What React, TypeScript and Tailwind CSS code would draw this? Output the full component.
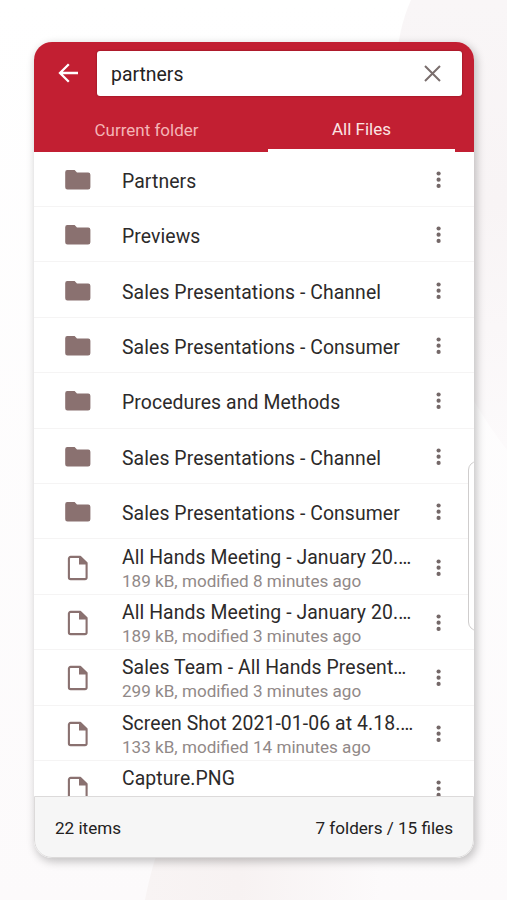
import React from "react";

type Item = { kind: "folder" | "file"; name: string; meta?: string };

const items: Item[] = [
  { kind: "folder", name: "Partners" },
  { kind: "folder", name: "Previews" },
  { kind: "folder", name: "Sales Presentations - Channel" },
  { kind: "folder", name: "Sales Presentations - Consumer" },
  { kind: "folder", name: "Procedures and Methods" },
  { kind: "folder", name: "Sales Presentations - Channel" },
  { kind: "folder", name: "Sales Presentations - Consumer" },
  { kind: "file", name: "All Hands Meeting - January 20.…", meta: "189 kB, modified 8 minutes ago" },
  { kind: "file", name: "All Hands Meeting - January 20.…", meta: "189 kB, modified 3 minutes ago" },
  { kind: "file", name: "Sales Team - All Hands Present…", meta: "299 kB, modified 3 minutes ago" },
  { kind: "file", name: "Screen Shot 2021-01-06 at 4.18.…", meta: "133 kB, modified 14 minutes ago" },
  { kind: "file", name: "Capture.PNG" },
];

function Backdrop() {
  return (
    <svg className="absolute inset-0" width="507" height="900" viewBox="0 0 507 900" aria-hidden="true">
      <defs>
        <linearGradient id="base" x1="0" y1="0" x2="0" y2="1">
          <stop offset="0" stopColor="#ffffff" />
          <stop offset="1" stopColor="#fcfafb" />
        </linearGradient>
        <linearGradient id="top" x1="0" y1="0" x2="0" y2="1">
          <stop offset="0" stopColor="#f9f6f7" />
          <stop offset="0.45" stopColor="#f8f4f5" />
          <stop offset="1" stopColor="#fcfafb" />
        </linearGradient>
        <linearGradient id="bottom" x1="0" y1="0" x2="1" y2="0">
          <stop offset="0" stopColor="#f8f4f4" />
          <stop offset="0.4" stopColor="#f7f2f2" />
          <stop offset="1" stopColor="#fcfafb" />
        </linearGradient>
      </defs>
      <rect width="507" height="900" fill="url(#base)" />
      <path d="M411 0C402 20 398 40 395 70C388 210 430 350 507 450V0Z" fill="url(#top)" />
      <path d="M145 900C148 885 151 872 156 856H380V900Z" fill="url(#bottom)" />
    </svg>
  );
}

function FolderIcon() {
  return (
    <svg className="mt-[2px]" width="26" height="20" viewBox="0 0 26 20" fill="#8a7170">
      <path d="M2.6 0H9.6L12 2.4H23.2A2.3 2.3 0 0 1 25.4 4.7V17.3A2.3 2.3 0 0 1 23.1 19.6H2.5A2.3 2.3 0 0 1 .2 17.3V2.3A2.3 2.3 0 0 1 2.6 0Z" />
    </svg>
  );
}

function FileIcon() {
  return (
    <svg className="mt-[2px]" width="22" height="26" viewBox="0 0 22 26" fill="none">
      <path d="M3.6 1.9H13.4L19.6 8.1V22.4A1.7 1.7 0 0 1 17.9 24.1H3.6A1.7 1.7 0 0 1 1.9 22.4V3.6A1.7 1.7 0 0 1 3.6 1.9Z" stroke="#8a7170" strokeWidth="2.1" strokeLinejoin="round" />
      <path d="M12 1.9H13.4L19.6 8.1V9.4H12Z" fill="#8a7170" />
    </svg>
  );
}

function MoreIcon() {
  return (
    <svg className="mt-[2px]" width="6" height="18" viewBox="0 0 6 18" fill="#746868">
      <circle cx="2.6" cy="2.5" r="2.1" />
      <circle cx="2.6" cy="8.7" r="2.1" />
      <circle cx="2.6" cy="14.9" r="2.1" />
    </svg>
  );
}

function Row({ item }: { item: Item }) {
  return (
    <li className="flex h-[55.4px] shrink-0 items-center border-b border-[#f5f4f4]">
      <div className="flex w-[88px] shrink-0 justify-center">
        {item.kind === "file" ? <FileIcon /> : <FolderIcon />}
      </div>
      <div
        className={
          item.kind === "file"
            ? "flex h-[48px] min-w-0 flex-1 translate-y-[2.9px] flex-col whitespace-nowrap"
            : "flex min-w-0 flex-1 translate-y-[2.6px] flex-col whitespace-nowrap"
        }
      >
        <span className="text-[19.4px] leading-[24px] tracking-[0.08px] text-[#2c2a2a]">{item.name}</span>
        {item.meta && (
          <span className="-mt-px text-[17.1px] leading-[24px] text-[#918988]">{item.meta}</span>
        )}
      </div>
      <div className="mr-[32.5px] flex w-[6px] shrink-0">
        <MoreIcon />
      </div>
    </li>
  );
}

export default function App() {
  return (
    <div className="relative h-[900px] w-[507px] overflow-hidden font-['Roboto',sans-serif]">
      <Backdrop />
      <div className="relative px-[34px] pt-[42px]">
        <main className="relative flex h-[816px] w-[440px] flex-col overflow-hidden rounded-[18px] bg-white shadow-[2px_3px_9px_1px_rgba(0,0,0,0.22)]">
          <header className="flex h-[109.6px] shrink-0 flex-col bg-[#c21f32]">
            <div className="flex items-center pt-[9px] pl-[24px]">
              <svg className="-mt-[1px]" width="22" height="20" viewBox="0 0 22 20" fill="none" stroke="white" strokeWidth="2.3">
                <path d="M20 10H2M10.8 1.2L2 10L10.8 18.8" />
              </svg>
              <div className="ml-[17px] flex h-[45px] w-[365px] items-center justify-between rounded-[3px] bg-white pr-[21px] pl-[14px] shadow-[0_0_2px_rgba(70,0,10,0.6)]">
                <span className="mt-[2px] text-[19.4px] text-[#242222]">partners</span>
                <svg className="-mt-[1px]" width="17" height="17" viewBox="0 0 17 17" fill="none" stroke="#7a6e6d" strokeWidth="2">
                  <path d="M1 1L16 16M16 1L1 16" />
                </svg>
              </div>
            </div>
            <nav className="flex flex-1 pr-[19px] pl-[19px] text-[17px]">
              <div className="flex w-[187px] items-center justify-center pt-[14px] text-[#f4b5b6]">Current folder</div>
              <div className="ml-[28px] flex w-[187px] items-center justify-center border-b-[3px] border-white pt-[14px] text-[#fbe4e2]">All Files</div>
            </nav>
          </header>
          <ul className="flex min-h-0 flex-1 flex-col overflow-hidden">
            {items.map((item, i) => (
              <Row key={i} item={item} />
            ))}
          </ul>
          <footer className="flex h-[62px] shrink-0 items-center justify-between rounded-b-[18px] border border-[#dcdada] bg-[#f6f6f6] px-[20px] pt-[4px] text-[17.1px] text-[#232121]">
            <span>22 items</span>
            <span>7 folders / 15 files</span>
          </footer>
          <div className="absolute top-[419px] -right-[4px] h-[170px] w-[10px] rounded-l-[9px] border border-[#cfcdcd] bg-white" />
        </main>
      </div>
    </div>
  );
}
